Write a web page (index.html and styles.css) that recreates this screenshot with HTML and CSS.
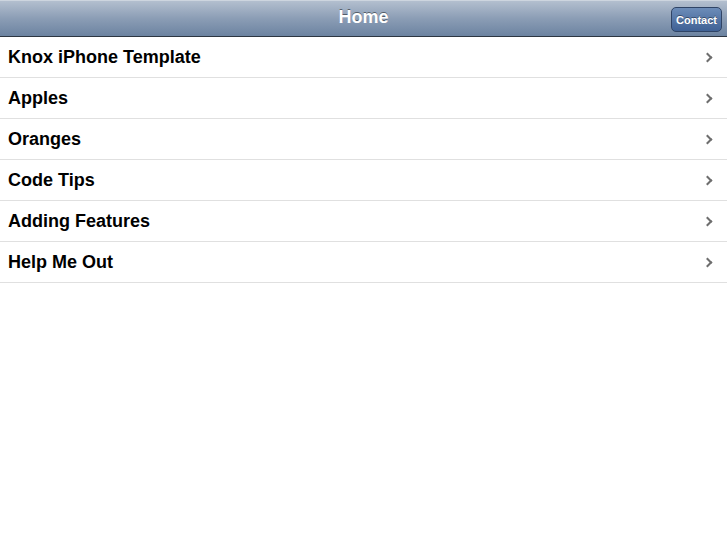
FILE: index.html
```html
<!DOCTYPE html>
<html lang="en">
<head>
    <meta charset="utf-8">
    <title>Home</title>
    <link rel="stylesheet" href="styles.css">
</head>
<body>
    <div class="toolbar">
        <h1>Home</h1>
        <a class="button" href="#contact">Contact</a>
    </div>

    <ul class="list">
        <li><a href="#knox">Knox iPhone Template</a></li>
        <li><a href="#apples">Apples</a></li>
        <li><a href="#oranges">Oranges</a></li>
        <li><a href="#tips">Code Tips</a></li>
        <li><a href="#features">Adding Features</a></li>
        <li><a href="#help">Help Me Out</a></li>
    </ul>
</body>
</html>
```

FILE: styles.css
```css
body {
    margin: 0;
    background: #fff;
    font-family: "Liberation Sans", Helvetica, Arial, sans-serif;
}

.toolbar {
    position: relative;
    height: 37px;
    background: linear-gradient(#b3bfcf, #8b9db5 50%, #6c83a1);
    border-bottom: 1px solid #2d3642;
    border-top: 1px solid #cdd5df;
    box-sizing: border-box;
}

.toolbar h1 {
    margin: 0;
    text-align: center;
    line-height: 33px;
    font-size: 18px;
    font-weight: bold;
    color: #fff;
    text-shadow: 0 -1px 0 rgba(0,0,0,0.45);
}

.button {
    position: absolute;
    top: 6px;
    right: 5px;
    height: 25px;
    padding: 0 4px;
    line-height: 24px;
    font-size: 11px;
    font-weight: bold;
    color: #fff;
    text-decoration: none;
    background: linear-gradient(#6c8cb8, #3f6195);
    border: 1px solid #2f4466;
    border-radius: 5px;
    box-sizing: border-box;
    text-shadow: 0 -1px 0 rgba(0,0,0,0.4);
}

.list {
    margin: 0;
    padding: 0;
    list-style: none;
}

.list li {
    border-bottom: 1px solid #e0e0e0;
}

.list a {
    display: block;
    height: 40px;
    line-height: 40px;
    padding: 0 8px;
    font-size: 18px;
    font-weight: bold;
    color: #000;
    text-decoration: none;
    position: relative;
}

.list a::after {
    content: "";
    position: absolute;
    right: 16px;
    top: 17px;
    width: 5px;
    height: 5px;
    border-top: 2px solid #6e6e6e;
    border-right: 2px solid #6e6e6e;
    transform: rotate(45deg);
}
```
